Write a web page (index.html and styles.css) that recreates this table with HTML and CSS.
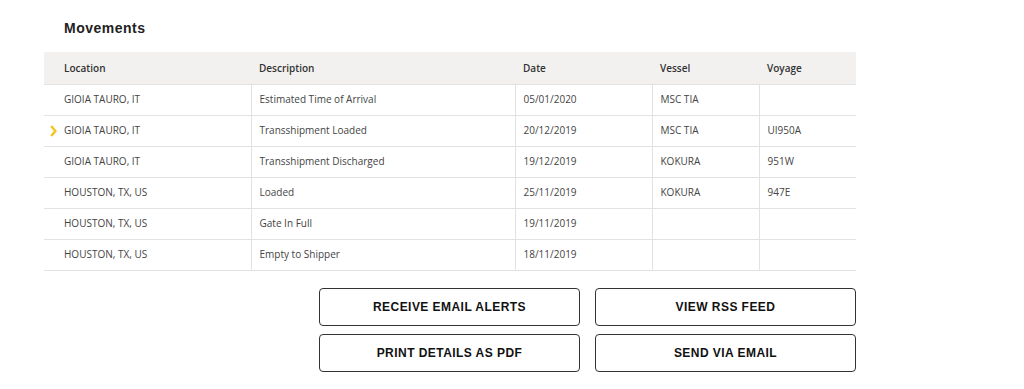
FILE: index.html
```html
<!DOCTYPE html>
<html>
<head>
<meta charset="utf-8">
<link rel="stylesheet" href="styles.css">
</head>
<body>
<div class="page">
  <h2 class="title">Movements</h2>
  <table class="moves">
    <thead>
      <tr>
        <th class="c-loc">Location</th>
        <th class="c-desc">Description</th>
        <th class="c-date">Date</th>
        <th class="c-ves">Vessel</th>
        <th class="c-voy">Voyage</th>
      </tr>
    </thead>
    <tbody>
      <tr><td class="c-loc">GIOIA TAURO, IT</td><td>Estimated Time of Arrival</td><td>05/01/2020</td><td>MSC TIA</td><td></td></tr>
      <tr class="current"><td class="c-loc"><svg class="chev" width="7" height="12" viewBox="0 0 7 12"><path d="M1.2 1 L5.4 6 L1.2 11" fill="none" stroke="#f3c41e" stroke-width="2.4"/></svg>GIOIA TAURO, IT</td><td>Transshipment Loaded</td><td>20/12/2019</td><td>MSC TIA</td><td>UI950A</td></tr>
      <tr><td class="c-loc">GIOIA TAURO, IT</td><td>Transshipment Discharged</td><td>19/12/2019</td><td>KOKURA</td><td>951W</td></tr>
      <tr><td class="c-loc">HOUSTON, TX, US</td><td>Loaded</td><td>25/11/2019</td><td>KOKURA</td><td>947E</td></tr>
      <tr><td class="c-loc">HOUSTON, TX, US</td><td>Gate In Full</td><td>19/11/2019</td><td></td><td></td></tr>
      <tr><td class="c-loc">HOUSTON, TX, US</td><td>Empty to Shipper</td><td>18/11/2019</td><td></td><td></td></tr>
    </tbody>
  </table>
  <div class="actions">
    <button class="btn">RECEIVE EMAIL ALERTS</button>
    <button class="btn">VIEW RSS FEED</button>
    <button class="btn">PRINT DETAILS AS PDF</button>
    <button class="btn">SEND VIA EMAIL</button>
  </div>
</div>
</body>
</html>
```
FILE: styles.css
```css
html, body {
  margin: 0;
  padding: 0;
  background: #fff;
}
.page {
  width: 812px;
  margin-left: 44px;
  padding-top: 19px;
  font-family: "Open Sans", "Noto Sans", sans-serif;
  color: #333;
}
.title {
  margin: 0 0 15px 20px;
  font-family: "Liberation Sans", Arial, sans-serif;
  font-weight: bold;
  font-size: 14px;
  letter-spacing: 0.5px;
  line-height: 18px;
  color: #222;
}
.moves {
  width: 812px;
  border-collapse: collapse;
  table-layout: fixed;
  font-size: 10px;
}
.moves th {
  background: #f2f1f0;
  height: 31px;
  padding: 0 0 1px 8px;
  text-align: left;
  font-weight: 600;
  color: #333;
  border-bottom: 1px solid #e2e2e2;
}
.moves td {
  height: 28px;
  padding: 0 0 2px 8px;
  color: #444;
  border-bottom: 1px solid #e2e2e2;
  border-left: 1px solid #e2e2e2;
  white-space: nowrap;
}
.moves td.c-loc {
  border-left: none;
  padding-left: 20px;
  position: relative;
}
.moves th.c-loc { padding-left: 20px; width: 187px; }
.moves th.c-desc { width: 256px; }
.moves th.c-date { width: 129px; }
.moves th.c-ves { width: 99px; }
.chev {
  position: absolute;
  left: 6px;
  top: 9px;
}
.actions {
  display: grid;
  grid-template-columns: 261px 261px;
  column-gap: 15px;
  row-gap: 8px;
  justify-content: end;
  margin-top: 17px;
}
.btn {
  height: 38px;
  background: #fff;
  border: 1px solid #333;
  border-radius: 4px;
  font-family: "Liberation Sans", Arial, sans-serif;
  font-weight: bold;
  font-size: 12px;
  color: #111;
  letter-spacing: 0.45px;
  padding: 0;
}
```
